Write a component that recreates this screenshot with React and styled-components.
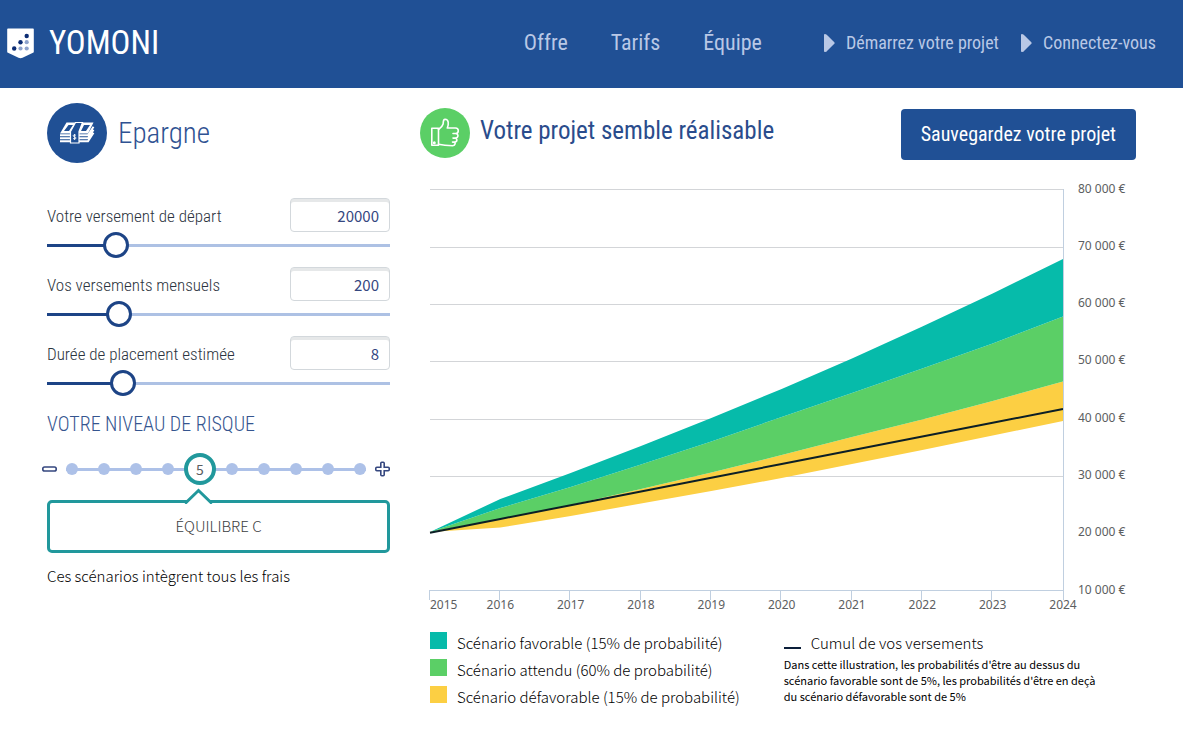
import React, { useState } from "react";
import styled, { createGlobalStyle } from "styled-components";

const display = `"Roboto Condensed", "Liberation Sans Narrow", "Liberation Sans", sans-serif`;
const body = `"Noto Sans CJK JP", "Noto Sans", sans-serif`;

const GlobalStyle = createGlobalStyle`
  * {
    box-sizing: border-box;
  }

  body {
    margin: 0;
    background: #fff;
    color: #000;
    font-family: ${body};
    font-size: 15px;
    font-weight: 300;
  }
`;

const Header = styled.header`
  display: flex;
  align-items: center;
  justify-content: space-between;
  min-height: 88px;
  padding: 0 27px 2px 7px;
  background: #205095;
`;

const Brand = styled.a`
  display: flex;
  align-items: center;
  gap: 15px;
  color: #fff;
  font-family: ${display};
  font-size: 33px;
  font-weight: 400;
  line-height: 40px;
  text-decoration: none;
`;

const Nav = styled.nav`
  display: flex;
  align-items: center;
  gap: 62px;
`;

const NavGroup = styled.div`
  display: flex;
  align-items: center;
  gap: ${(props) => props.$gap}px;
`;

const NavLink = styled.a`
  display: flex;
  align-items: center;
  gap: 11px;
  color: #b9c8e6;
  font-family: ${display};
  font-size: ${(props) => (props.$small ? 18 : 22)}px;
  font-weight: 400;
  line-height: 28px;
  text-decoration: none;
`;

const Main = styled.main`
  display: grid;
  grid-template-columns: 343fr 706fr;
  gap: 40px;
  padding: 15px 47px 24px;
`;

const Title = styled.h1`
  display: flex;
  align-items: center;
  gap: 11px;
  margin: 0 0 35px;
  color: #2f5292;
  font-family: ${display};
  font-size: 29px;
  font-weight: 300;
  line-height: 60px;
`;

const Field = styled.div`
  display: flex;
  flex-wrap: wrap;
  align-items: center;
  justify-content: space-between;
  margin-bottom: 9px;
`;

const FieldLabel = styled.label`
  padding-top: 2px;
  color: #2c3440;
  font-family: ${display};
  font-size: 17px;
  font-weight: 300;
`;

const FieldInput = styled.input`
  width: 100px;
  height: 34px;
  padding: 0 10px;
  border: 1px solid #d3d8dc;
  border-radius: 4px;
  box-shadow: inset 0 3px #e6e8e9;
  color: #35477f;
  font-family: ${body};
  font-size: 15px;
  text-align: right;
`;

const Range = styled.input`
  appearance: none;
  width: 100%;
  height: 26px;
  margin: 0;
  background: linear-gradient(#1d4486, #1d4486) left center / var(--fill) 3px
      no-repeat,
    linear-gradient(#adc1e4, #adc1e4) center / 100% 3px no-repeat;

  &::-webkit-slider-thumb {
    appearance: none;
    width: 26px;
    height: 26px;
    border: 3px solid #1d4486;
    border-radius: 50%;
    background: #fff;
  }
`;

const RiskTitle = styled.h2`
  margin: 16px 0 17px;
  color: #35558f;
  font-family: ${display};
  font-size: 20px;
  font-weight: 300;
  line-height: 24px;
`;

const RiskScale = styled.div`
  display: flex;
  align-items: center;
  justify-content: space-between;
  margin-left: -5px;
`;

const StepButton = styled.button`
  display: flex;
  padding: 0;
  border: 0;
  background: none;
`;

const Steps = styled.div`
  display: flex;
  flex: 1;
  align-items: center;
  justify-content: space-between;
  height: 32px;
  margin: 0 9px;
  background: linear-gradient(#adc1e8, #adc1e8) center / 100% 3px no-repeat;
`;

const Step = styled.button`
  flex: none;
  width: ${(props) => (props.$active ? 32 : 12)}px;
  height: ${(props) => (props.$active ? 32 : 12)}px;
  margin: 0 ${(props) => (props.$active ? -10 : 0)}px;
  padding: 0;
  border: ${(props) => (props.$active ? "4px solid #21989c" : "0")};
  border-radius: 50%;
  background: ${(props) => (props.$active ? "#fff" : "#adc1e8")};
  color: #5b5d60;
  font-family: ${body};
  font-size: 14px;
  line-height: 22px;
`;

const Profile = styled.div`
  position: relative;
  margin-top: 15px;
  padding: 11px 12px 13px;
  border: 3px solid #21989c;
  border-radius: 5px;
  color: #3b3d40;
  line-height: 23px;
  text-align: center;
`;

const Pointer = styled.svg`
  position: absolute;
  bottom: 100%;
  left: calc(45% - 18px);
  margin-bottom: -1px;
`;

const Note = styled.p`
  margin: 11px 0 0;
  line-height: 24px;
`;

const Summary = styled.div`
  display: flex;
  align-items: flex-end;
  justify-content: space-between;
  margin: 5px 0 29px -10px;
`;

const Verdict = styled.h2`
  display: flex;
  align-items: flex-start;
  gap: 10px;
  margin: 0;
  padding-bottom: 2px;
  color: #2a4c8c;
  font-family: ${display};
  font-size: 25px;
  font-weight: 400;
  line-height: 46px;
`;

const SaveButton = styled.button`
  padding: 14px 20px;
  border: 0;
  border-radius: 4px;
  background: #205095;
  color: #fff;
  font-family: ${display};
  font-size: 20px;
  line-height: 23px;
`;

const Chart = styled.svg`
  display: block;
  width: 100%;
  overflow: visible;

  text {
    fill: #5c5e61;
    font-family: "Noto Sans", sans-serif;
    font-size: 12px;
    font-weight: 400;
  }
`;

const Legend = styled.div`
  display: flex;
  gap: 44px;
  margin-top: 17px;
`;

const LegendList = styled.ul`
  display: grid;
  flex: none;
  gap: 5px;
  margin: 0;
  padding: 0;
  list-style: none;
`;

const LegendItem = styled.li`
  display: flex;
  gap: 10px;
  line-height: 22px;
`;

const Swatch = styled.span`
  width: 17px;
  height: 17px;
  background: ${(props) => props.$color};
`;

const LineSwatch = styled.span`
  width: 17px;
  height: 17px;
  border-bottom: 2px solid #0c1f3a;
`;

const LegendNote = styled.p`
  max-width: 320px;
  margin: 2px 0 0;
  font-size: 11px;
  font-weight: 400;
  line-height: 16px;
`;

const years = [2015, 2016, 2017, 2018, 2019, 2020, 2021, 2022, 2023, 2024];
const amounts = [80, 70, 60, 50, 40, 30, 20, 10];

const favorable = [
  20125, 25890, 30420, 35140, 40030, 45090, 50400, 56000, 61760, 67780,
];
const expected = [
  20125, 24310, 27980, 31910, 35920, 40200, 44400, 48670, 53030, 57740,
];
const unfavorable = [
  20125, 22400, 24850, 27630, 30500, 33570, 36710, 39760, 42990, 46400,
];
const floor = [
  20125, 20910, 22920, 25100, 27280, 29550, 32000, 34440, 36970, 39500,
];
const deposits = years.map((_, i) => 20000 + i * 2400);

const chartWidth = 633;
const chartHeight = 401;
const x = (i) => (i * chartWidth) / (years.length - 1);
const y = (value) => chartHeight - ((value - 10000) / 70000) * chartHeight;

const line = (values) => values.map((v, i) => `${x(i)},${y(v)}`);
const area = (top, bottom) =>
  [...line(top), ...line(bottom).reverse()].join(" ");

const fields = [
  { id: "depart", label: "Votre versement de départ", value: 20000, min: 5000, max: 90000 },
  { id: "mensuel", label: "Vos versements mensuels", value: 200, min: 0, max: 1075 },
  { id: "duree", label: "Durée de placement estimée", value: 8, min: 1, max: 36 },
];

const Shield = () => (
  <svg width="27" height="31" viewBox="0 0 27 31" aria-hidden="true">
    <path
      d="M1 0.500h25q.8 0 .8.8v22.400q0 .8-.8 1.100l-10.500 5q-2 .9-4 0L1 24.800q-.8-.3-.8-1.100V1.300q0-.8.8-.8z"
      fill="#fff"
    />
    <g fill="#0b2c74">
      <circle cx="19.700" cy="8" r="2.200" />
      <circle cx="13.500" cy="14.200" r="2.200" />
      <circle cx="7.200" cy="20.500" r="2.200" />
    </g>
    <g fill="#8ea3cc">
      <circle cx="19.700" cy="14.200" r="2.100" />
      <circle cx="13.500" cy="20.500" r="2.100" />
      <circle cx="19.700" cy="20.500" r="2.100" />
    </g>
  </svg>
);

const Caret = () => (
  <svg width="11" height="18" viewBox="0 0 11 18" aria-hidden="true">
    <path
      d="M0 0.800q0-.8 1-.8q1.500 0 2.500 1.500l6.800 6.700q.8.800 0 1.600l-6.800 6.700q-1 1.500-2.500 1.500q-1 0-1-.8z"
      fill="#b9c8e6"
    />
  </svg>
);

const Banknotes = () => (
  <svg width="60" height="60" viewBox="0 0 60 60" aria-hidden="true">
    <circle cx="30" cy="30" r="30" fill="#205095" />
    <path d="M19.500 19.500h27l-5.500 11h-28z" fill="#fff" />
    <path
      d="M21.500 22h4.500l-4 6h-5zM37 22h6l-4 6h-5z"
      fill="#205095"
    />
    <path
      d="M13 32.300h28l5.500-8.500M13 35.300h28l5.500-8.500M13 38.300h28l5.500-8.500"
      fill="none"
      stroke="#fff"
      strokeWidth="2"
    />
    <path
      d="M28.500 19.500h7l-3.500 9v11.500h-8.500V28.500z"
      fill="#205095"
      stroke="#fff"
      strokeWidth="1.200"
    />
    <path
      d="M28.800 32.200q-2.600-.9-2.600.5q0 .8 1.300 1.100q1.500.3 1.500 1.300q0 1.500-2.900.5M27.600 31v6"
      fill="none"
      stroke="#fff"
      strokeWidth="0.900"
    />
  </svg>
);

const ThumbUp = () => (
  <svg width="50" height="50" viewBox="0 0 50 50" aria-hidden="true">
    <circle cx="25" cy="25" r="25" fill="#5bcf66" />
    <g
      fill="none"
      stroke="#fff"
      strokeWidth="1.600"
      strokeLinecap="round"
      strokeLinejoin="round"
    >
      <path d="M11.800 20.300h6.700v17h-6.700z" />
      <circle cx="14.300" cy="34.700" r="0.700" />
      <path d="M18.500 21.500c2.500-1.600 4-3.300 4.600-5.500c.4-1.500-.4-4.500 2-4.700c3.700 0 3.800 4.700 2.200 8.700h8.200c3.700 0 3.700 5.500 0 5.500h-2.500h2.500c3.400 0 3.300 4.600-.5 4.600h-2h1.700c3 0 3 4-.6 4h-1.600h1c2.600 0 2 3.600-.8 3.600c-5.200 0-9.700-.3-14.200-1.400" />
    </g>
  </svg>
);

const Minus = () => (
  <svg width="15" height="16" viewBox="0 0 15 16" aria-hidden="true">
    <rect
      x="0.800"
      y="6"
      width="13.400"
      height="4"
      rx="1.800"
      fill="#fff"
      stroke="#35477f"
      strokeWidth="1.600"
    />
  </svg>
);

const Plus = () => (
  <svg width="15" height="16" viewBox="0 0 15 16" aria-hidden="true">
    <path
      d="M5.800 2.200q0-1 1-1h1.400q1 0 1 1v4.100h4q1 0 1 1v1.400q0 1-1 1h-4v4.100q0 1-1 1h-1.400q-1 0-1-1v-4.100h-4q-1 0-1-1v-1.400q0-1 1-1h4z"
      fill="#fff"
      stroke="#35477f"
      strokeWidth="1.600"
    />
  </svg>
);

const SliderField = ({ id, label, value, min, max }) => {
  const [amount, setAmount] = useState(value);
  const fill = ((amount - min) / (max - min)) * 100;
  const onChange = (e) => setAmount(Number(e.target.value));

  return (
    <Field>
      <FieldLabel htmlFor={id}>{label}</FieldLabel>
      <FieldInput id={id} type="text" value={amount} onChange={onChange} />
      <Range
        type="range"
        aria-label={label}
        min={min}
        max={max}
        value={amount}
        onChange={onChange}
        style={{ "--fill": `${fill}%` }}
      />
    </Field>
  );
};

const ProjectionChart = () => (
  <Chart viewBox="0 0 706 426" role="img" aria-label="Scénarios">
    {amounts.map((amount) => (
      <g key={amount}>
        {/* no grid line at the starting amount */}
        {amount !== 20 && (
          <line
            x2={chartWidth}
            y1={Math.ceil(y(amount * 1000)) + 0.5}
            y2={Math.ceil(y(amount * 1000)) + 0.5}
            stroke={amount === 10 ? "#c0cfe0" : "#d3d5d8"}
          />
        )}
        <text x="648" y={Math.floor(y(amount * 1000)) + 4}>
          {amount} 000 €
        </text>
      </g>
    ))}
    <polygon points={area(unfavorable, floor)} fill="#fccf43" />
    <polygon points={area(expected, unfavorable)} fill="#5bcf66" />
    <polygon points={area(favorable, expected)} fill="#06bbaa" />
    <polyline
      points={line(deposits).join(" ")}
      fill="none"
      stroke="#0c1f26"
      strokeWidth="2"
    />
    <line x1="633.5" x2="633.5" y2={chartHeight + 10} stroke="#c0cfe0" />
    {years.map((year, i) => (
      <g key={year}>
        <line
          x1={Math.floor(x(i)) - 0.5}
          x2={Math.floor(x(i)) - 0.5}
          y1={chartHeight}
          y2={chartHeight + 10}
          stroke={i === years.length - 1 ? "none" : "#c0cfe0"}
        />
        <text
          x={i === 0 ? 0 : x(i)}
          y={chartHeight + 19}
          textAnchor={i === 0 ? "start" : "middle"}
        >
          {year}
        </text>
      </g>
    ))}
  </Chart>
);

const App = () => {
  const [risk, setRisk] = useState(5);

  return (
    <>
      <GlobalStyle />
      <Header>
        <Brand href="#">
          <Shield />
          YOMONI
        </Brand>
        <Nav>
          <NavGroup $gap={43}>
            <NavLink href="#offre">Offre</NavLink>
            <NavLink href="#tarifs">Tarifs</NavLink>
            <NavLink href="#equipe">Équipe</NavLink>
          </NavGroup>
          <NavGroup $gap={22}>
            <NavLink href="#projet" $small>
              <Caret />
              Démarrez votre projet
            </NavLink>
            <NavLink href="#connexion" $small>
              <Caret />
              Connectez-vous
            </NavLink>
          </NavGroup>
        </Nav>
      </Header>
      <Main>
        <section>
          <Title>
            <Banknotes />
            Epargne
          </Title>
          {fields.map((field) => (
            <SliderField key={field.id} {...field} />
          ))}
          <RiskTitle>VOTRE NIVEAU DE RISQUE</RiskTitle>
          <RiskScale>
            <StepButton
              aria-label="Moins"
              onClick={() => setRisk(Math.max(1, risk - 1))}
            >
              <Minus />
            </StepButton>
            <Steps>
              {[1, 2, 3, 4, 5, 6, 7, 8, 9, 10].map((step) => (
                <Step
                  key={step}
                  $active={step === risk}
                  aria-label={`Niveau ${step}`}
                  onClick={() => setRisk(step)}
                >
                  {step === risk && step}
                </Step>
              ))}
            </Steps>
            <StepButton
              aria-label="Plus"
              onClick={() => setRisk(Math.min(10, risk + 1))}
            >
              <Plus />
            </StepButton>
          </RiskScale>
          <Profile>
            <Pointer width="30" height="16" viewBox="0 0 30 16">
              <path d="M2 16L15 3L28 16z" fill="#fff" />
              <path
                d="M1 15.500L14.500 2.500L28 15.500"
                fill="none"
                stroke="#21989c"
                strokeWidth="3"
              />
            </Pointer>
            ÉQUILIBRE C
          </Profile>
          <Note>Ces scénarios intègrent tous les frais</Note>
        </section>
        <section>
          <Summary>
            <Verdict>
              <ThumbUp />
              Votre projet semble réalisable
            </Verdict>
            <SaveButton>Sauvegardez votre projet</SaveButton>
          </Summary>
          <ProjectionChart />
          <Legend>
            <LegendList>
              <LegendItem>
                <Swatch $color="#06bbaa" />
                Scénario favorable (15% de probabilité)
              </LegendItem>
              <LegendItem>
                <Swatch $color="#5bcf66" />
                Scénario attendu (60% de probabilité)
              </LegendItem>
              <LegendItem>
                <Swatch $color="#fccf43" />
                Scénario défavorable (15% de probabilité)
              </LegendItem>
            </LegendList>
            <div>
              <LegendItem as="div">
                <LineSwatch />
                Cumul de vos versements
              </LegendItem>
              <LegendNote>
                Dans cette illustration, les probabilités d'être au dessus du
                scénario favorable sont de 5%, les probabilités d'être en deçà
                du scénario défavorable sont de 5%
              </LegendNote>
            </div>
          </Legend>
        </section>
      </Main>
    </>
  );
};

export default App;
